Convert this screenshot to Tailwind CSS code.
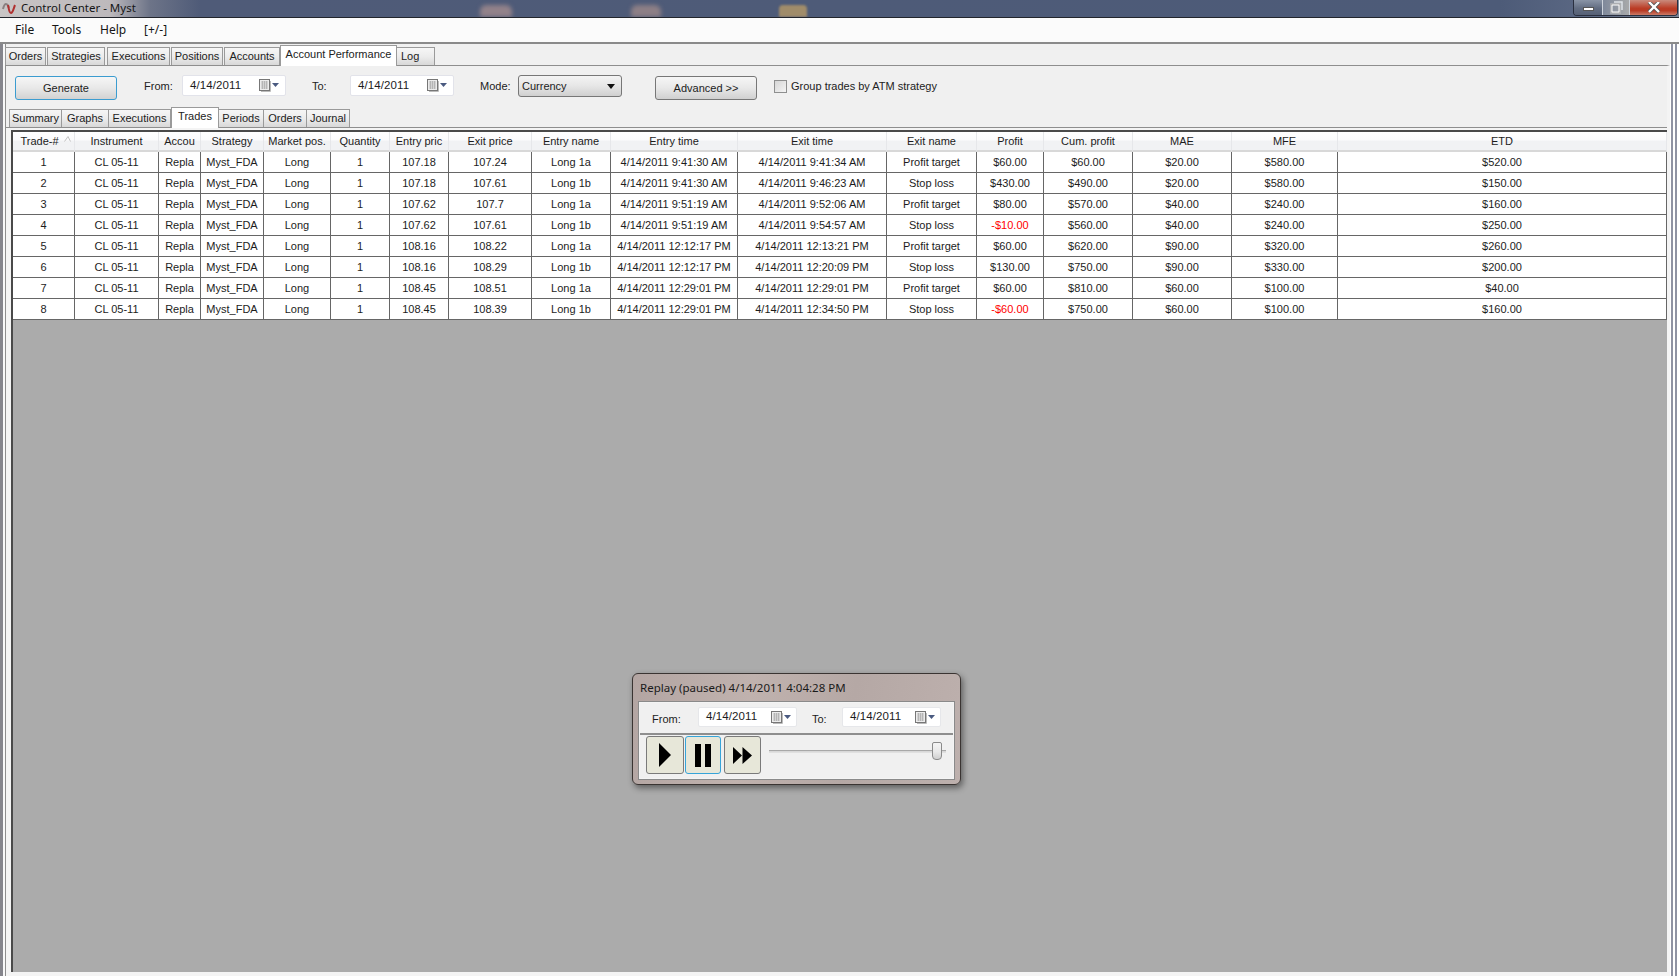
<!DOCTYPE html>
<html>
<head>
<meta charset="utf-8">
<script src="https://cdn.jsdelivr.net/npm/@tailwindcss/browser@4"></script>
</head>
<body class="m-0 overflow-hidden">
<div class="relative w-[1679px] h-[976px] overflow-hidden flex flex-col bg-[#f0f0f0] text-[#1c1c1c] text-[11px] font-['Liberation_Sans',Arial,sans-serif]">

  <!-- title bar -->
  <div class="relative h-[18px] shrink-0 flex items-start border-b border-[#22252c] bg-[linear-gradient(90deg,#c9c5c5_0px,#bdb9bc_110px,#6d7488_150px,#4f5b78_200px,#4d5b78_1500px,#5d6a85_1600px,#7d8799_1679px)] overflow-hidden">
    <svg class="ml-[2px] mt-[2px] w-[14px] h-[13px]" viewBox="0 0 14 13"><path d="M1 7C2 3 3 2 4 2C6 2 6 4 7 6" fill="none" stroke="#8a8080" stroke-width="2"/><path d="M6 3C7 7 7 11 9 11C11 11 12 5 13 3" fill="none" stroke="#b03030" stroke-width="2"/></svg>
    <span class="ml-[5px] leading-[16px] text-[11.5px] font-['Noto_Sans',sans-serif] text-[#151515]">Control Center - Myst</span>
    <div class="absolute left-[480px] top-[5px] w-[32px] h-[12px] rounded-t-md blur-[2px] bg-[#92828a]"></div>
    <div class="absolute left-[631px] top-[5px] w-[30px] h-[12px] rounded-t-md blur-[2px] bg-[#8d7f86]"></div>
    <div class="absolute left-[779px] top-[5px] w-[28px] h-[12px] rounded-t-sm blur-[1px] bg-[#a08c6a]"></div>
    <div class="absolute right-[1px] top-0 h-[16px] w-[105px] flex rounded-b-[4px] border border-t-0 border-[#2a3040] overflow-hidden">
      <div class="w-[29px] flex items-center justify-center border-r border-[#cdd3dc] bg-[linear-gradient(180deg,#8994a6,#626d82_55%,#566075)]"><div class="w-[11px] h-[4px] mt-[2px] bg-white border border-[#555]"></div></div>
      <div class="w-[27px] flex items-center justify-center border-r border-[#cdd3dc] bg-[linear-gradient(90deg,#7f899b,#a8a9aa)]">
        <svg class="w-[13px] h-[13px]" viewBox="0 0 13 13"><path d="M4 1H12V9" fill="none" stroke="#dfe3e8" stroke-width="1.5"/><rect x="1.5" y="3.5" width="8" height="8" fill="none" stroke="#fff" stroke-width="2"/><rect x="1" y="3" width="9" height="9" fill="none" stroke="#555" stroke-width=".5"/></svg>
      </div>
      <div class="flex-1 flex items-center justify-center bg-[linear-gradient(180deg,#c98a7c,#bb3d26_55%,#b93a24_70%,#c97a66)]">
        <svg class="w-[14px] h-[11px]" viewBox="0 0 14 11"><path d="M2 0L12 10M12 0L2 10" stroke="#555" stroke-width="4"/><path d="M2 0L12 10M12 0L2 10" stroke="#fff" stroke-width="2.4"/></svg>
      </div>
    </div>
  </div>

  <!-- menu -->
  <div class="h-[26px] shrink-0 flex items-center bg-[#fbfbfb] border-b-2 border-[#8a8a8a] font-['Noto_Sans',sans-serif] text-[12px] text-[#151515] pl-[15px]">
    <span class="w-[37px]">File</span><span class="w-[48px]">Tools</span><span class="w-[44px]">Help</span><span>[+/-]</span>
  </div>

  <!-- body frame -->
  <div class="flex-1 min-h-0 flex">
    <!-- left stripes -->
    <div class="w-[3px] bg-[#85858c] shrink-0"></div>
    <div class="w-[2px] bg-[#f8f8f8] shrink-0"></div>
    <div class="w-[1px] bg-[#8e8e8e] shrink-0"></div>

    <div class="flex-1 min-w-0 flex flex-col">
      <!-- main tabs -->
      <div class="h-[21px] shrink-0 flex items-end -ml-[1px] text-[#222] whitespace-nowrap">
        <div class="w-[41px] h-[18px] mr-[1px] flex items-center justify-center border border-b-0 border-[#9a9a9a] bg-[linear-gradient(180deg,#f6f6f6,#ececec_50%,#d8d8d8)]">Orders</div>
        <div class="w-[58px] h-[18px] mr-[2px] flex items-center justify-center border border-b-0 border-[#9a9a9a] bg-[linear-gradient(180deg,#f6f6f6,#ececec_50%,#d8d8d8)]">Strategies</div>
        <div class="w-[63px] h-[18px] mr-[1px] flex items-center justify-center border border-b-0 border-[#9a9a9a] bg-[linear-gradient(180deg,#f6f6f6,#ececec_50%,#d8d8d8)]">Executions</div>
        <div class="w-[52px] h-[18px] mr-[1px] flex items-center justify-center border border-b-0 border-[#9a9a9a] bg-[linear-gradient(180deg,#f6f6f6,#ececec_50%,#d8d8d8)]">Positions</div>
        <div class="w-[56px] h-[18px] flex items-center justify-center border border-b-0 border-[#9a9a9a] bg-[linear-gradient(180deg,#f6f6f6,#ececec_50%,#d8d8d8)]">Accounts</div>
        <div class="w-[117px] h-[21px] -mb-[1px] pb-[3px] relative z-10 flex items-center justify-center border border-b-0 border-[#9a9a9a] bg-white">Account Performance</div>
        <div class="w-[38px] h-[18px] flex items-center pl-[4px] border border-b-0 border-l-0 border-[#9a9a9a] bg-[linear-gradient(180deg,#f6f6f6,#ececec_50%,#d8d8d8)]">Log</div>
      </div>

      <!-- tab panel -->
      <div class="flex-1 min-h-0 flex flex-col border-t border-[#8e8e8e] bg-[#f0f0f0] border-r-[3px] border-r-[#f4f4f4]">
        <!-- toolbar -->
        <div class="h-[40px] shrink-0 flex items-start pl-[9px] pt-[8px]">
          <div class="w-[102px] h-[24px] mt-[2px] flex items-center justify-center rounded-[3px] border border-[#3b9cd0] bg-[linear-gradient(180deg,#f6f6f6,#e8e8e8_50%,#d2d2d2)]">Generate</div>
          <span class="ml-[27px] w-[38px] mt-[2px] leading-[20px] text-[#222]">From:</span>
          <div class="w-[104px] h-[21px] mt-[1px] flex items-center rounded-[2px] border border-[#e2e3ea] bg-white pl-[7px]">
            <span class="w-[69px] text-[11.5px] tracking-[.1px]">4/14/2011</span>
            <svg class="w-[20px] h-[13px]" viewBox="0 0 20 13"><path d="M2 12.500H11.500V2" fill="none" stroke="#bbb"/><rect x=".5" y=".5" width="10" height="11" fill="#ececec" stroke="#777"/><path d="M2 3H9M2 5H9M2 7H9M2 9H9M3.500 2V10M5.500 2V10M7.500 2V10" stroke="#a8a8a8" stroke-width=".7"/><path d="M13 4H20L16.500 8Z" fill="#4a5a80"/></svg>
          </div>
          <span class="ml-[26px] w-[38px] mt-[2px] leading-[20px] text-[#222]">To:</span>
          <div class="w-[104px] h-[21px] mt-[1px] flex items-center rounded-[2px] border border-[#e2e3ea] bg-white pl-[7px]">
            <span class="w-[69px] text-[11.5px] tracking-[.1px]">4/14/2011</span>
            <svg class="w-[20px] h-[13px]" viewBox="0 0 20 13"><path d="M2 12.500H11.500V2" fill="none" stroke="#bbb"/><rect x=".5" y=".5" width="10" height="11" fill="#ececec" stroke="#777"/><path d="M2 3H9M2 5H9M2 7H9M2 9H9M3.500 2V10M5.500 2V10M7.500 2V10" stroke="#a8a8a8" stroke-width=".7"/><path d="M13 4H20L16.500 8Z" fill="#4a5a80"/></svg>
          </div>
          <span class="ml-[26px] w-[38px] mt-[2px] leading-[20px] text-[#222]">Mode:</span>
          <div class="w-[104px] h-[22px] mt-[1px] flex items-center justify-between rounded-[3px] border border-[#777] bg-[linear-gradient(180deg,#f4f4f4,#e6e6e6_50%,#cfcfcf)] pl-[3px] pr-[6px]">
            <span>Currency</span>
            <svg class="w-[8px] h-[5px]" viewBox="0 0 8 5"><path d="M0 0H8L4 5Z" fill="#111"/></svg>
          </div>
          <div class="ml-[33px] w-[102px] h-[24px] mt-[2px] flex items-center justify-center rounded-[3px] border border-[#777] bg-[linear-gradient(180deg,#f6f6f6,#e8e8e8_50%,#d0d0d0)]">Advanced &gt;&gt;</div>
          <div class="ml-[17px] mt-[6px] w-[13px] h-[13px] border border-[#8e8f8f] bg-[linear-gradient(135deg,#d6d6d6,#f4f4f4)]"></div>
          <span class="ml-[4px] mt-[2px] leading-[20px] text-[#222]">Group trades by ATM strategy</span>
        </div>

        <!-- sub tabs -->
        <div class="h-[21px] shrink-0 flex items-end pl-[3px] text-[#222] whitespace-nowrap">
          <div class="w-[53px] h-[18px] flex items-center justify-center border border-b-0 border-[#9a9a9a] bg-[linear-gradient(180deg,#f6f6f6,#ececec_50%,#d8d8d8)]">Summary</div>
          <div class="w-[47px] h-[18px] flex items-center justify-center border border-b-0 border-l-0 border-[#9a9a9a] bg-[linear-gradient(180deg,#f6f6f6,#ececec_50%,#d8d8d8)]">Graphs</div>
          <div class="w-[62px] h-[18px] flex items-center justify-center border border-b-0 border-l-0 border-[#9a9a9a] bg-[linear-gradient(180deg,#f6f6f6,#ececec_50%,#d8d8d8)]">Executions</div>
          <div class="w-[48px] h-[21px] -mb-[1px] pb-[3px] relative z-10 flex items-center justify-center border border-b-0 border-[#9a9a9a] bg-white">Trades</div>
          <div class="w-[45px] h-[18px] flex items-center justify-center border border-b-0 border-l-0 border-[#9a9a9a] bg-[linear-gradient(180deg,#f6f6f6,#ececec_50%,#d8d8d8)]">Periods</div>
          <div class="w-[43px] h-[18px] flex items-center justify-center border border-b-0 border-l-0 border-[#9a9a9a] bg-[linear-gradient(180deg,#f6f6f6,#ececec_50%,#d8d8d8)]">Orders</div>
          <div class="w-[43px] h-[18px] flex items-center justify-center border border-b-0 border-l-0 border-[#9a9a9a] bg-[linear-gradient(180deg,#f6f6f6,#ececec_50%,#d8d8d8)]">Journal</div>
        </div>

        <!-- grid panel -->
        <div class="flex-1 min-h-0 border-t border-[#8e8e8e] pt-[2px] pl-[5px] pb-[4px] bg-[#f4f4f4]">
          <div class="h-full border-l-2 border-t-2 border-[#4a4a4a] bg-[#ababab]">
            <table class="border-separate border-spacing-0 table-fixed text-center w-[1654px] [&_th]:font-normal [&_th]:h-[20px] [&_th]:p-0 [&_th]:pt-[1px] [&_th]:border-r [&_th]:border-b-2 [&_th]:border-r-[#e6e7ea] [&_th]:border-b-[#d8d8d8] [&_th]:bg-[linear-gradient(180deg,#ffffff,#fbfbfc_45%,#f1f2f4_50%,#f1f2f4)] [&_td]:h-[21px] [&_td]:p-0 [&_td]:bg-white [&_td]:border-r [&_td]:border-b [&_td]:border-[#666]">
              <colgroup>
                <col class="w-[62px]"><col class="w-[84px]"><col class="w-[42px]"><col class="w-[63px]"><col class="w-[67px]"><col class="w-[59px]"><col class="w-[59px]"><col class="w-[83px]"><col class="w-[79px]"><col class="w-[127px]"><col class="w-[149px]"><col class="w-[90px]"><col class="w-[67px]"><col class="w-[89px]"><col class="w-[99px]"><col class="w-[106px]"><col class="w-[329px]">
              </colgroup>
              <thead>
                <tr><th><span class="relative -left-[4px]">Trade-#<svg class="absolute left-[44px] top-[1px] w-[7px] h-[6px]" viewBox="0 0 7 6"><path d="M.5 5.500L4 .5L6.500 5.500" fill="none" stroke="#c4c4c4"/></svg></span></th><th>Instrument</th><th>Accou</th><th>Strategy</th><th>Market pos.</th><th>Quantity</th><th>Entry pric</th><th>Exit price</th><th>Entry name</th><th>Entry time</th><th>Exit time</th><th>Exit name</th><th>Profit</th><th>Cum. profit</th><th>MAE</th><th>MFE</th><th>ETD</th></tr>
              </thead>
              <tbody>
                <tr><td>1</td><td>CL 05-11</td><td>Repla</td><td>Myst_FDA</td><td>Long</td><td>1</td><td>107.18</td><td>107.24</td><td>Long 1a</td><td>4/14/2011 9:41:30 AM</td><td>4/14/2011 9:41:34 AM</td><td>Profit target</td><td>$60.00</td><td>$60.00</td><td>$20.00</td><td>$580.00</td><td>$520.00</td></tr>
                <tr><td>2</td><td>CL 05-11</td><td>Repla</td><td>Myst_FDA</td><td>Long</td><td>1</td><td>107.18</td><td>107.61</td><td>Long 1b</td><td>4/14/2011 9:41:30 AM</td><td>4/14/2011 9:46:23 AM</td><td>Stop loss</td><td>$430.00</td><td>$490.00</td><td>$20.00</td><td>$580.00</td><td>$150.00</td></tr>
                <tr><td>3</td><td>CL 05-11</td><td>Repla</td><td>Myst_FDA</td><td>Long</td><td>1</td><td>107.62</td><td>107.7</td><td>Long 1a</td><td>4/14/2011 9:51:19 AM</td><td>4/14/2011 9:52:06 AM</td><td>Profit target</td><td>$80.00</td><td>$570.00</td><td>$40.00</td><td>$240.00</td><td>$160.00</td></tr>
                <tr><td>4</td><td>CL 05-11</td><td>Repla</td><td>Myst_FDA</td><td>Long</td><td>1</td><td>107.62</td><td>107.61</td><td>Long 1b</td><td>4/14/2011 9:51:19 AM</td><td>4/14/2011 9:54:57 AM</td><td>Stop loss</td><td class="text-[#ff0000]">-$10.00</td><td>$560.00</td><td>$40.00</td><td>$240.00</td><td>$250.00</td></tr>
                <tr><td>5</td><td>CL 05-11</td><td>Repla</td><td>Myst_FDA</td><td>Long</td><td>1</td><td>108.16</td><td>108.22</td><td>Long 1a</td><td>4/14/2011 12:12:17 PM</td><td>4/14/2011 12:13:21 PM</td><td>Profit target</td><td>$60.00</td><td>$620.00</td><td>$90.00</td><td>$320.00</td><td>$260.00</td></tr>
                <tr><td>6</td><td>CL 05-11</td><td>Repla</td><td>Myst_FDA</td><td>Long</td><td>1</td><td>108.16</td><td>108.29</td><td>Long 1b</td><td>4/14/2011 12:12:17 PM</td><td>4/14/2011 12:20:09 PM</td><td>Stop loss</td><td>$130.00</td><td>$750.00</td><td>$90.00</td><td>$330.00</td><td>$200.00</td></tr>
                <tr><td>7</td><td>CL 05-11</td><td>Repla</td><td>Myst_FDA</td><td>Long</td><td>1</td><td>108.45</td><td>108.51</td><td>Long 1a</td><td>4/14/2011 12:29:01 PM</td><td>4/14/2011 12:29:01 PM</td><td>Profit target</td><td>$60.00</td><td>$810.00</td><td>$60.00</td><td>$100.00</td><td>$40.00</td></tr>
                <tr><td>8</td><td>CL 05-11</td><td>Repla</td><td>Myst_FDA</td><td>Long</td><td>1</td><td>108.45</td><td>108.39</td><td>Long 1b</td><td>4/14/2011 12:29:01 PM</td><td>4/14/2011 12:34:50 PM</td><td>Stop loss</td><td class="text-[#ff0000]">-$60.00</td><td>$750.00</td><td>$60.00</td><td>$100.00</td><td>$160.00</td></tr>
              </tbody>
            </table>
          </div>
        </div>
      </div>
    </div>

    <!-- right stripes -->
    <div class="w-[1px] bg-white shrink-0"></div>
    <div class="w-[2px] bg-[#8f93a3] shrink-0"></div>
    <div class="w-[2px] bg-white shrink-0"></div>
    <div class="w-[2px] bg-[#8f93a3] shrink-0"></div>
    <div class="w-[2px] bg-white shrink-0"></div>
  </div>

  <!-- floating replay window -->
  <div class="absolute left-[632px] top-[673px] w-[329px] h-[112px] rounded-[6px] border border-[#3a3432] bg-[linear-gradient(100deg,#b3a5a2,#c0b2ae_35%,#b5a8a5_65%,#bdb0ad)] shadow-[2px_3px_6px_rgba(0,0,0,.45)] px-[6px] flex flex-col">
    <div class="h-[28px] shrink-0 flex items-center pl-[1px] font-['Noto_Sans',sans-serif] text-[11.5px] text-[#1a1a1a]">Replay (paused) 4/14/2011 4:04:28 PM</div>
    <div class="h-[77px] flex flex-col border border-[#f4f4f4] outline outline-[#8a8a8a] bg-[#f0f0f0]">
      <div class="h-[32px] shrink-0 flex items-center pl-[12px] border-b-2 border-[#8e8e8e]">
        <span class="mt-[3px] w-[46px]">From:</span>
        <div class="-mt-[2px] w-[99px] h-[20px] flex items-center rounded-[2px] border border-[#e6e7ea] bg-white pl-[7px]">
          <span class="w-[65px] text-[11.5px] tracking-[.1px]">4/14/2011</span>
          <svg class="w-[20px] h-[13px]" viewBox="0 0 20 13"><path d="M2 12.500H11.500V2" fill="none" stroke="#bbb"/><rect x=".5" y=".5" width="10" height="11" fill="#ececec" stroke="#777"/><path d="M2 3H9M2 5H9M2 7H9M2 9H9M3.500 2V10M5.500 2V10M7.500 2V10" stroke="#a8a8a8" stroke-width=".7"/><path d="M13 4H20L16.500 8Z" fill="#4a5a80"/></svg>
        </div>
        <span class="ml-[15px] mt-[3px] w-[30px]">To:</span>
        <div class="-mt-[2px] w-[99px] h-[20px] flex items-center rounded-[2px] border border-[#e6e7ea] bg-white pl-[7px]">
          <span class="w-[65px] text-[11.5px] tracking-[.1px]">4/14/2011</span>
          <svg class="w-[20px] h-[13px]" viewBox="0 0 20 13"><path d="M2 12.500H11.500V2" fill="none" stroke="#bbb"/><rect x=".5" y=".5" width="10" height="11" fill="#ececec" stroke="#777"/><path d="M2 3H9M2 5H9M2 7H9M2 9H9M3.500 2V10M5.500 2V10M7.500 2V10" stroke="#a8a8a8" stroke-width=".7"/><path d="M13 4H20L16.500 8Z" fill="#4a5a80"/></svg>
        </div>
      </div>
      <div class="flex-1 flex items-start pl-[6px] pt-[1px]">
        <div class="w-[38px] h-[38px] flex items-center justify-center rounded-[3px] border border-[#7a7a7a] bg-[#e7e7d9]">
          <svg class="w-[14px] h-[26px]" viewBox="0 0 14 26"><path d="M1 1L13 13L1 25Z" fill="#000"/></svg>
        </div>
        <div class="ml-[1px] w-[36px] h-[38px] flex items-center justify-center rounded-[3px] border border-[#36a4d8] bg-[#e7e7d9]">
          <svg class="w-[16px] h-[23px]" viewBox="0 0 16 23"><path d="M0 0H6V23H0ZM10 0H16V23H10Z" fill="#000"/></svg>
        </div>
        <div class="ml-[3px] w-[37px] h-[38px] flex items-center justify-center rounded-[3px] border border-[#7a7a7a] bg-[#e7e7d9]">
          <svg class="w-[19px] h-[17px]" viewBox="0 0 19 17"><path d="M0 0L9 8.500L0 17ZM9.500 0L19 8.500L9.500 17Z" fill="#000"/></svg>
        </div>
        <div class="ml-[8px] mt-[6px] w-[177px] h-[19px] flex items-center relative">
          <div class="w-full h-[3px] border-t border-b border-t-[#a8a8a8] border-b-[#e0e0e0] bg-[#d8d8d8]"></div>
          <div class="absolute right-[4px] top-0 w-[10px] h-[18px] rounded-b-[4px] rounded-t-[2px] border border-[#8a8a8a] bg-[linear-gradient(180deg,#f4f4f4,#e8e8e8_55%,#cfcfcf)]"></div>
        </div>
      </div>
    </div>
  </div>
</div>
</body>
</html>
